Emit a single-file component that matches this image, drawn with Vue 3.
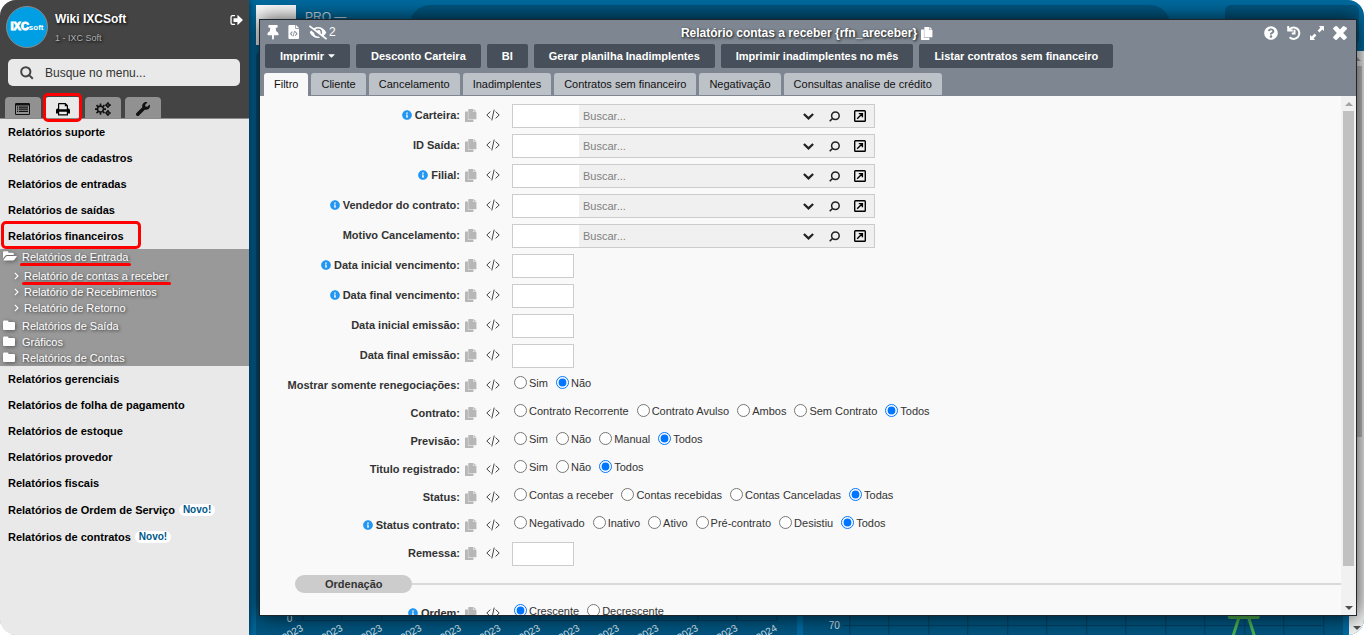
<script setup>
import { h, reactive } from 'vue'

const paths = {
  pin: ['0 0 384 512', 'M298.028 214.267L285.793 96H328c13.255 0 24-10.745 24-24V24c0-13.255-10.745-24-24-24H56C42.745 0 32 10.745 32 24v48c0 13.255 10.745 24 24 24h42.207L85.972 214.267C37.465 236.82 0 277.261 0 328c0 13.255 10.745 24 24 24h136v104.007c0 1.242.289 2.467.845 3.578l24 48c2.941 5.882 11.364 5.893 14.311 0l24-48a8.008 8.008 0 0 0 .845-3.578V352h136c13.255 0 24-10.745 24-24-.001-51.183-37.983-91.42-85.973-113.733z'],
  hidden: ['0 0 640 512', 'M320 400c-75.85 0-137.25-58.71-142.9-133.11L72.2 185.82c-13.79 17.3-26.48 35.59-36.72 55.59a32.35 32.35 0 0 0 0 29.19C89.71 376.41 197.07 448 320 448c26.91 0 52.87-4 77.89-10.46L346 397.39a144.13 144.13 0 0 1-26 2.61zm313.82 58.1l-110.55-85.44a331.25 331.25 0 0 0 81.25-102.07 32.35 32.35 0 0 0 0-29.19C550.29 135.59 442.93 64 320 64a308.15 308.15 0 0 0-147.32 37.7L45.46 3.37A16 16 0 0 0 23 6.18L3.37 31.45A16 16 0 0 0 6.18 53.9l588.36 454.73a16 16 0 0 0 22.46-2.81l19.64-25.27a16 16 0 0 0-2.82-22.45zm-183.72-142l-39.3-30.38A94.75 94.75 0 0 0 416 256a94.76 94.76 0 0 0-121.31-92.21A47.65 47.65 0 0 1 304 192a46.64 46.64 0 0 1-1.54 10l-73.61-56.89A142.31 142.31 0 0 1 320 112a143.92 143.92 0 0 1 144 144c0 21.63-5.29 41.79-13.9 60.11z'],
  wrench: ['0 0 512 512', 'M507.73 109.1c-2.24-9.03-13.54-12.09-20.12-5.51l-74.36 74.36-67.88-11.31-11.31-67.88 74.36-74.36c6.62-6.62 3.43-17.9-5.66-20.16-47.38-11.74-99.55.91-136.58 37.93-39.64 39.64-50.55 97.1-34.05 147.2L18.74 402.76c-24.99 24.99-24.99 65.51 0 90.5 24.99 24.99 65.51 24.99 90.5 0l213.21-213.21c50.12 16.71 107.47 5.68 147.37-34.22 37.07-37.07 49.7-89.32 37.91-136.73z'],
  help: ['0 0 512 512', 'M504 256c0 136.997-111.043 248-248 248S8 392.997 8 256C8 119.083 119.043 8 256 8s248 111.083 248 248zM262.655 90c-54.497 0-89.255 22.957-116.549 63.758-3.536 5.286-2.353 12.415 2.715 16.258l34.699 26.31c5.205 3.947 12.621 3.008 16.665-2.122 17.864-22.658 30.113-35.797 57.303-35.797 20.429 0 45.698 13.148 45.698 32.958 0 14.976-12.363 22.667-32.534 33.976C247.128 238.528 216 254.941 216 296v4c0 6.627 5.373 12 12 12h56c6.627 0 12-5.373 12-12v-1.333c0-28.462 83.186-29.647 83.186-106.667 0-58.002-60.165-102-116.531-102zM256 338c-25.365 0-46 20.635-46 46 0 25.364 20.635 46 46 46s46-20.636 46-46c0-25.365-20.635-46-46-46z'],
  info: ['0 0 512 512', 'M256 8C119.043 8 8 119.083 8 256c0 136.997 111.043 248 248 248s248-111.003 248-248C504 119.083 392.957 8 256 8zm0 110c23.196 0 42 18.804 42 42s-18.804 42-42 42-42-18.804-42-42 18.804-42 42-42zm56 254c0 6.627-5.373 12-12 12h-88c-6.627 0-12-5.373-12-12v-24c0-6.627 5.373-12 12-12h12v-64h-12c-6.627 0-12-5.373-12-12v-24c0-6.627 5.373-12 12-12h64c6.627 0 12 5.373 12 12v100h12c6.627 0 12 5.373 12 12v24z'],
  folder: ['0 0 12 12', 'M1.2 1.5H4.8Q5.4 1.5 5.4 2.1V3H10.9Q12 3 12 4V10Q12 11 10.9 11H1.1Q0 11 0 10V2.6Q0 1.5 1.2 1.5z'],
  folderOpen: ['0 0 14 12', 'M0 8.5V2.4Q0 1.2 1.2 1.2H4.4Q5.4 1.2 5.4 2.2V2.8H9.6Q10.8 2.8 10.8 4V5H4.2Q2.8 5 2.2 5.8zM.6 9.8 3 6.6Q3.4 6 4.2 6H13.4Q14.2 6 13.6 6.8L11.4 9.8Q10.8 10.6 10 10.6H1Q.2 10.6 .6 9.8z'],
  print: ['0 0 14 14', 'M3 1H9.6L12 3.4V6.5H12.4Q14 6.7 14 8.2V11.5H12V13.4H2V11.5H0V8.2Q0 6.7 1.6 6.5H2V2Q2 1 3 1zM3.2 2.2V7.2H10.8V4.2H8.8V2.2zM3.2 9.8V12.2H10.8V9.8z'],
  list: ['0 0 15 12', 'M1.2 0H13.8Q15 0 15 1.2V10.8Q15 12 13.8 12H1.2Q0 12 0 10.8V1.2Q0 0 1.2 0zM1 2.5V11H14V2.5zM2 3.5H3.2V4.7H2zM4 3.5H13V4.7H4zM2 5.6H3.2V6.8H2zM4 5.6H13V6.8H4zM2 7.7H3.2V9H2zM4 7.7H13V9H4z'],
  signout: ['0 0 13 12', 'M5 1H2.4Q.4 1 .4 3V9Q.4 11 2.4 11H5V9.8H2.6Q1.7 9.8 1.7 9V3Q1.7 2.2 2.6 2.2H5zM4 4.2H7.4V1.4Q7.4 .8 8 1.3L12.5 5.6Q12.9 6 12.5 6.4L8 10.7Q7.4 11.2 7.4 10.6V7.9H4Q3.5 7.9 3.5 7.4V4.7Q3.5 4.2 4 4.2z'],
  copy: ['0 0 12 13', 'M0 3.2Q0 2.6 .6 2.6H2.9V10.7H8.4V12.4Q8.4 13 7.8 13H.6Q0 13 0 12.4zM3.3 .6Q3.3 0 3.9 0H8.3V3H11.4V9.7Q11.4 10.3 10.8 10.3H3.9Q3.3 10.3 3.3 9.7zM8.8 0 11.4 2.5H8.8z'],
  fileCode: ['0 0 12 15', 'M1 0H7.4V4H11.4V14Q11.4 15 10.4 15H1Q0 15 0 14V1Q0 0 1 0zM8.2 0 11.4 3.2H8.2zM3.9 6.8 1.6 9.3 3.9 11.8 4.6 11.1 3 9.3 4.6 7.5zM6.1 6.3 4.7 12.2 5.5 12.4 7 6.5zM7.6 6.8 6.9 7.5 8.5 9.3 6.9 11.1 7.6 11.8 9.9 9.3z'],
  close: ['0 0 12 12', 'M2.8 0Q3.3 0 3.7 .4L6 2.9 8.3 .4Q8.7 0 9.2 0L11.8 1.5Q12.2 2.3 11.7 2.8L8.7 6 11.7 9.2Q12.2 9.7 11.7 10.3L10 11.8Q9.3 12.2 8.8 11.7L6 8.9 3.2 11.7Q2.7 12.2 2 11.8L.3 10.3Q-.2 9.7 .3 9.2L3.3 6 .3 2.8Q-.2 2.3 .3 1.7L1.8 .3Q2.3 0 2.8 0z'],
  expand: ['0 0 14 14', 'M9 0H13.5Q14 0 14 .5V5L12.2 3.6 9.4 6.4 7.6 4.6 10.4 1.8zM0 9 1.8 10.4 4.6 7.6 6.4 9.4 3.6 12.2 5 14H.5Q0 14 0 13.5z'],
  caret: ['0 0 8 4', 'M.4 0H7.6Q8 0 7.7 .4L4.4 3.7Q4 4 3.6 3.7L.3 .4Q0 0 .4 0z'],
}
const lines = {
  search: ['0 0 14 14', 2, 'M5.8 1.2a4.6 4.6 0 1 1 0 9.2a4.6 4.6 0 0 1 0-9.2zM9.4 9.4 12.8 12.8'],
  lens: ['0 0 11 11', 1.5, 'M6.4 .9a3.8 3.8 0 1 1 0 7.6a3.8 3.8 0 0 1 0-7.6zM3.6 7.4 .7 10.3'],
  chevron: ['0 0 10 7', 2, 'M.8 1.2 5 5.2 9.2 1.2'],
  open: ['0 0 12 12', 1.4, 'M1.5 .7H10.5Q11.3 .7 11.3 1.5V10.5Q11.3 11.3 10.5 11.3H1.5Q.7 11.3 .7 10.5V1.5Q.7 .7 1.5 .7zM3.2 8.8 8 4M4.8 3.6H8.4V7.2'],
  code: ['0 0 14 12', 1, 'M4.4 2.6.8 6 4.4 9.4M9.6 2.6 13.2 6 9.6 9.4M8.2 .6 5.8 11.4'],
  history: ['0 0 14 14', 2, 'M2.2 3.6A5.7 5.7 0 1 1 2.6 11.2M1.2 0V4.6H5.8M7.5 3.8V7.6H4.8'],
  arrow: ['0 0 5 8', 1.2, 'M.8 .8 4 4 .8 7.2'],
  gears: ['0 0 16 14', 1.6, 'M5.5 4.1a3 3 0 1 1 0 6a3 3 0 0 1 0-6zM5.5 1.4V3.6M5.500 10.6V12.8M0 7.1H2M9 7.1H11M1.500 3.1 3 4.6M8 9.600 9.500 11.1M9.500 3.100 8 4.600M3 9.600 1.500 11.1M12.9 1.7a1.400 1.400 0 1 1 0 2.800a1.400 1.400 0 0 1 0-2.800zM12.900 9.600a1.400 1.400 0 1 1 0 2.800a1.400 1.400 0 0 1 0-2.800zM12.900 .2V1.600M12.900 4.600V6M10.200 3.100H11.400M14.400 3.100H15.800M12.900 8.100V9.500M12.900 12.500V13.900M10.200 11H11.400M14.400 11H15.800'],
}

function Icon({ name }) {
  if (paths[name]) {
    const [viewBox, d] = paths[name]
    return h('svg', { viewBox, fill: 'currentColor', 'fill-rule': 'evenodd', 'aria-hidden': 'true' }, [h('path', { d })])
  }
  const [viewBox, width, d] = lines[name]
  return h('svg', { viewBox, fill: 'none', stroke: 'currentColor', 'stroke-width': width, 'aria-hidden': 'true' }, [h('path', { d })])
}
Icon.props = ['name']

const sideTabs = [
  { icon: 'list', name: 'Cadastros' },
  { icon: 'print', name: 'Relatórios', active: true },
  { icon: 'gears', name: 'Configurações' },
  { icon: 'wrench', name: 'Ferramentas' },
]
const menuTop = ['Relatórios suporte', 'Relatórios de cadastros', 'Relatórios de entradas', 'Relatórios de saídas', 'Relatórios financeiros']
const menuBottom = [
  { text: 'Relatórios gerenciais' },
  { text: 'Relatórios de folha de pagamento' },
  { text: 'Relatórios de estoque' },
  { text: 'Relatórios provedor' },
  { text: 'Relatórios fiscais' },
  { text: 'Relatórios de Ordem de Serviço', isNew: true },
  { text: 'Relatórios de contratos', isNew: true },
]
const reports = ['Relatório de contas a receber', 'Relatório de Recebimentos', 'Relatório de Retorno']
const folders = ['Relatórios de Saída', 'Gráficos', 'Relatórios de Contas']

const actions = ['Imprimir', 'Desconto Carteira', 'BI', 'Gerar planilha Inadimplentes', 'Imprimir inadimplentes no mês', 'Listar contratos sem financeiro']
const tabs = ['Filtro', 'Cliente', 'Cancelamento', 'Inadimplentes', 'Contratos sem financeiro', 'Negativação', 'Consultas analise de crédito']

const fields = [
  { id: 'carteira', label: 'Carteira', info: true, type: 'lookup' },
  { id: 'saida', label: 'ID Saída', type: 'lookup' },
  { id: 'filial', label: 'Filial', info: true, type: 'lookup' },
  { id: 'vendedor', label: 'Vendedor do contrato', info: true, type: 'lookup' },
  { id: 'motivo', label: 'Motivo Cancelamento', type: 'lookup' },
  { id: 'venc-ini', label: 'Data inicial vencimento', info: true, type: 'text' },
  { id: 'venc-fim', label: 'Data final vencimento', info: true, type: 'text' },
  { id: 'emi-ini', label: 'Data inicial emissão', type: 'text' },
  { id: 'emi-fim', label: 'Data final emissão', type: 'text' },
  { id: 'reneg', label: 'Mostrar somente renegociações', type: 'radio', options: ['Sim', 'Não'] },
  { id: 'contrato', label: 'Contrato', type: 'radio', options: ['Contrato Recorrente', 'Contrato Avulso', 'Ambos', 'Sem Contrato', 'Todos'] },
  { id: 'previsao', label: 'Previsão', type: 'radio', options: ['Sim', 'Não', 'Manual', 'Todos'] },
  { id: 'titulo', label: 'Titulo registrado', type: 'radio', options: ['Sim', 'Não', 'Todos'] },
  { id: 'status', label: 'Status', type: 'radio', options: ['Contas a receber', 'Contas recebidas', 'Contas Canceladas', 'Todas'] },
  { id: 'status-contrato', label: 'Status contrato', info: true, type: 'radio', options: ['Negativado', 'Inativo', 'Ativo', 'Pré-contrato', 'Desistiu', 'Todos'] },
  { id: 'remessa', label: 'Remessa', type: 'text' },
  { id: 'ordenacao', type: 'section', label: 'Ordenação' },
  { id: 'ordem', label: 'Ordem', info: true, type: 'radio', options: ['Crescente', 'Decrescente'] },
]
const chosen = reactive({
  reneg: 'Não', contrato: 'Todos', previsao: 'Todos', titulo: 'Todos',
  status: 'Todas', 'status-contrato': 'Todos', ordem: 'Crescente',
})
const years = [...Array(12).fill('2023'), '2024']
</script>

<template>
  <div class="app">
    <aside class="sidebar">
      <header class="side-head">
        <div class="user">
          <div class="avatar"><span><b>IXC</b><small>soft</small></span></div>
          <div class="who">
            <strong>Wiki IXCSoft</strong>
            <span>1 - IXC Soft</span>
          </div>
          <button class="bare signout" aria-label="Sair"><Icon name="signout" /></button>
        </div>
        <label class="menu-search">
          <Icon name="search" />
          <input type="text" placeholder="Busque no menu..." aria-label="Busque no menu">
        </label>
        <nav class="side-tabs">
          <button v-for="t in sideTabs" :key="t.icon" :class="['side-tab', t.icon, { active: t.active }]" :aria-label="t.name">
            <Icon :name="t.icon" />
            <i v-if="t.active" class="mark-tab"></i>
          </button>
        </nav>
      </header>
      <nav class="menu">
        <a v-for="(m, i) in menuTop" :key="m" href="#" class="item">{{ m }}<i v-if="i === 4" class="mark-box"></i></a>
        <div class="submenu">
          <a href="#" class="folder first"><Icon name="folderOpen" /><span>Relatórios de Entrada<i class="mark-line"></i></span></a>
          <a v-for="(r, i) in reports" :key="r" href="#" class="report"><Icon name="arrow" /><span>{{ r }}<i v-if="i === 0" class="mark-line"></i></span></a>
          <div class="folders">
            <a v-for="f in folders" :key="f" href="#" class="folder"><Icon name="folder" /><span>{{ f }}</span></a>
          </div>
        </div>
        <a v-for="m in menuBottom" :key="m.text" href="#" :class="['item', { fresh: m.isNew }]">{{ m.text }}<span v-if="m.isNew" class="new">Novo!</span></a>
      </nav>
    </aside>

    <main class="workspace">
      <div class="topbar">
        <div class="logo"></div>
        <div class="brand">PRO —</div>
        <div class="top-search"></div>
        <div class="profile"></div>
      </div>
      <div class="board">
        <div class="panels">
          <section class="panel">
            <svg class="chart" viewBox="0 0 541 40" preserveAspectRatio="xMidYMax slice">
              <path class="grid" d="M47 0V26M86 0V26M126 0V26M165 0V26M205 0V26M244 0V26M284 0V26M323 0V26M363 0V26M402 0V26M442 0V26M481 0V26M521 0V26M40 25.500H521" />
              <text x="31" y="27">0</text>
              <text v-for="(y, i) in years" :key="i" :transform="`translate(${48 + i * 39.5} 35) rotate(-30)`" text-anchor="end">{{ y }}</text>
              <path d="M477 20.500H487" stroke="#1787c4" />
            </svg>
          </section>
          <section class="panel">
            <svg class="chart" viewBox="0 0 541 40" preserveAspectRatio="xMidYMax slice">
              <path class="grid" d="M47 0V40M86 0V40M126 0V40M165 0V40M205 0V40M244 0V40M284 0V40M323 0V40M363 0V40M402 0V40M442 0V40M481 0V40M521 0V40M40 30.500H521" />
              <text x="26" y="34">70</text>
              <path d="M425 18H457V22Q457 24 455 24H427Q425 24 425 22z" fill="#4caf50" />
              <path d="M436 23 430 42M446 23 452 42" fill="none" stroke="#4caf50" stroke-width="3" />
            </svg>
          </section>
        </div>
        <div class="scrollbar page-scroll"><i class="up"></i><div class="track"><div class="thumb"></div></div><i class="down"></i></div>
      </div>

      <section class="dialog" role="dialog" aria-labelledby="dlg-title">
        <header class="dlg-head">
          <div class="titlebar">
            <div class="tools">
              <button class="bare" aria-label="Fixar"><Icon name="pin" /></button>
              <button class="bare" aria-label="Código"><Icon name="fileCode" /></button>
              <button class="bare eye"><Icon name="hidden" /><span>2</span></button>
            </div>
            <h1 id="dlg-title">Relatório contas a receber {rfn_areceber} <Icon name="copy" /></h1>
            <div class="tools end">
              <button class="bare" aria-label="Ajuda"><Icon name="help" /></button>
              <button class="bare" aria-label="Histórico"><Icon name="history" /></button>
              <button class="bare" aria-label="Expandir"><Icon name="expand" /></button>
              <button class="bare" aria-label="Fechar"><Icon name="close" /></button>
            </div>
          </div>
          <div class="actions">
            <button v-for="(a, i) in actions" :key="a">{{ a }}<Icon v-if="i === 0" name="caret" /></button>
          </div>
          <nav class="tabs">
            <button v-for="(t, i) in tabs" :key="t" :class="{ active: i === 0 }">{{ t }}</button>
          </nav>
        </header>
        <div class="dlg-body">
          <form class="form" @submit.prevent>
            <div v-for="f in fields" :key="f.id" :class="['row', f.type]">
              <template v-if="f.type === 'section'">
                <h2>{{ f.label }}</h2><hr>
              </template>
              <template v-else>
                <div class="label">
                  <Icon v-if="f.info" name="info" />
                  <span v-if="f.type === 'radio'" :id="f.id">{{ f.label }}:</span>
                  <label v-else :for="f.id">{{ f.label }}:</label>
                </div>
                <div class="marks"><Icon name="copy" /><Icon name="code" /></div>
                <div v-if="f.type === 'lookup'" class="lookup-box">
                  <input :id="f.id" type="text" class="code">
                  <input type="text" class="find" placeholder="Buscar..." :aria-label="'Buscar ' + f.label">
                  <button type="button" class="bare" aria-label="Abrir lista"><Icon name="chevron" /></button>
                  <button type="button" class="bare" aria-label="Pesquisar"><Icon name="lens" /></button>
                  <button type="button" class="bare" aria-label="Abrir cadastro"><Icon name="open" /></button>
                </div>
                <input v-else-if="f.type === 'text'" :id="f.id" type="text" class="short">
                <div v-else class="options" role="radiogroup" :aria-labelledby="f.id">
                  <label v-for="o in f.options" :key="o"><input v-model="chosen[f.id]" type="radio" :name="f.id" :value="o">{{ o }}</label>
                </div>
              </template>
            </div>
          </form>
          <div class="scrollbar"><i class="up"></i><div class="track"><div class="thumb"></div></div><i class="down"></i></div>
        </div>
      </section>
    </main>
  </div>
</template>

<style>
body { margin: 0; background: #fff; }
</style>

<style scoped>
* { box-sizing: border-box; }
.app { display: flex; height: 100vh; overflow: hidden; border-radius: 16px; font: 11px/16px "Liberation Sans", Arial, sans-serif; color: #333; }
button, input { font: inherit; color: inherit; }
a { color: inherit; text-decoration: none; }
svg { display: block; flex: none; }
.bare { display: flex; align-items: center; justify-content: center; padding: 0; border: 0; background: none; }

/* sidebar */
.sidebar { width: 249px; flex: none; display: flex; flex-direction: column; background: #e9e9e9; box-shadow: 0 0 8px rgba(0, 0, 0, .6); z-index: 1; }
.side-head { height: 119px; background: #444; border-bottom: 1px solid #8c8c8c; display: flex; flex-direction: column; }
.user { display: flex; height: 59px; padding: 6px 6px 0; }
.avatar { width: 42px; height: 42px; border: 1px solid #888; border-radius: 50%; background: #009ee3; color: #fff; display: flex; align-items: center; justify-content: center; font-size: 11px; line-height: 40px; }
.avatar b { -webkit-text-stroke: 1px #fff; }
.avatar small { font-size: 8px; font-weight: bold; }
.who { flex: 1; margin-left: 7px; padding-top: 5px; display: flex; flex-direction: column; gap: 5px; text-shadow: 1px 1px 3px #000; }
.who strong { color: #fff; font-size: 12px; }
.who span { color: #b0b0b0; font-size: 9px; line-height: 12px; }
.signout { width: 14px; height: 28px; color: #fff; }
.signout svg { width: 13px; height: 12px; }
.menu-search { display: flex; align-items: center; height: 27px; margin: 0 9px 0 8px; border-radius: 5px; background: #e9e9e9; padding-left: 12px; gap: 11px; color: #444; }
.menu-search svg { width: 14px; height: 14px; }
.menu-search input { flex: 1; min-width: 0; border: 0; padding: 0; background: none; font-size: 12px; outline: 0; }
.menu-search input::placeholder { color: #333; opacity: 1; }
.side-tabs { display: flex; gap: 4px; margin-top: auto; padding-left: 5px; }
.side-tab { position: relative; width: 36px; height: 21px; display: flex; align-items: center; justify-content: center; padding: 2px 1px 0 0; border: 0; border-radius: 4px 4px 0 0; background: #919191; color: #111; }
.side-tab svg { width: 14px; height: 14px; }
.side-tab.list svg { width: 15px; height: 12px; }
.side-tab.gears svg { width: 16px; }
.side-tab.active { background: #e9e9e9; color: #000; }
.mark-tab { position: absolute; inset: -4px -1px -4px -2px; border: 3px solid #f00; border-radius: 5px; }
.menu { display: flex; flex-direction: column; }
.item { position: relative; display: flex; align-items: center; height: 26px; padding-left: 8px; font-weight: bold; color: #000; }
.item.fresh { height: 27px; }
.mark-box { position: absolute; left: 1px; top: -2px; width: 140px; height: 28px; border: 3px solid #f00; border-radius: 5px; }
.new { margin-left: 4px; padding: 0 4px; border-radius: 6px; background: #fff; color: #00588a; font-size: 10px; line-height: 12px; }
.submenu { background: #999; height: 117px; color: #fff; text-shadow: 1px 1px 3px #333; }
.submenu svg { filter: drop-shadow(1px 1px 2px #555); }
.folder { display: flex; align-items: center; height: 16px; padding-left: 3px; }
.folder svg { width: 12px; height: 12px; margin: 0 7px 2px 0; }
.folder.first { height: 19px; padding-bottom: 3px; }
.folder.first svg { width: 14px; margin-right: 5px; }
.report { display: flex; align-items: center; height: 16px; padding-left: 14px; gap: 5px; }
.report svg { width: 5px; height: 8px; }
.folders { padding-top: 2px; }
.submenu span { position: relative; }
.mark-line { position: absolute; left: -2px; right: -3px; bottom: -1px; height: 3px; border-radius: 2px; background: #f00; }

/* backdrop */
.workspace { position: relative; flex: 1; min-width: 0; display: flex; flex-direction: column; background: #006a9f; }
.topbar { display: flex; height: 51px; padding: 5px 5px 6px 7px; }
.logo { width: 40px; background: #fff; }
.brand { width: 114px; padding: 4px 0 0 9px; color: #cfe0ea; font-size: 12px; }
.top-search { flex: 1; background: #00557f; border-radius: 20px; }
.profile { width: 134px; margin-left: 55px; background: #00557f; border-radius: 6px; }
.board { flex: 1; display: flex; }
.panels { flex: 1; display: flex; gap: 6px; padding: 0 6px 0 7px; }
.panel { flex: 1; display: flex; align-items: flex-end; background: #005580; border-radius: 6px 6px 0 0; }
.chart { width: 100%; height: 40px; fill: #d6e2ea; font-size: 10px; }
.grid { fill: none; stroke: #003f61; }

/* scroll bars */
.scrollbar { width: 15px; flex: none; display: flex; flex-direction: column; background: #f1f1f1; }
.scrollbar i { height: 15px; flex: none; display: flex; align-items: center; justify-content: center; }
.scrollbar i::before { content: ""; border: 4px solid transparent; border-top-width: 0; border-bottom-color: #a3a3a3; }
.scrollbar .down::before { border-top: 4px solid #505050; border-bottom: 0; }
.track { flex: 1; padding: 0 2px; }
.thumb { height: 93%; background: #c1c1c1; }
.page-scroll .thumb { height: 67%; }

/* dialog */
.dialog { position: absolute; inset: 19px 7px 19px 10px; display: flex; flex-direction: column; overflow: hidden; border: 1px solid #1e252b; background: #f9f9f9; box-shadow: 0 0 20px rgba(0, 0, 0, .8); }
.dlg-head { background: #7e8791; color: #fff; }
.titlebar { display: grid; grid-template-columns: 1fr auto 1fr; height: 24px; padding: 0 9px 0 7px; }
.tools { display: flex; align-items: center; gap: 9px; }
.tools svg { width: 14px; height: 14px; }
.tools svg[viewBox^="0 0 384"] { width: 12px; height: 15px; }
.tools svg[viewBox="0 0 12 15"] { width: 12px; }
.tools .eye svg { width: 18px; height: 15px; }
.tools .eye { gap: 2px; font-size: 12px; }
.tools.end { justify-content: flex-end; gap: 9px; padding-top: 2px; }
h1 { margin: 0; display: flex; align-items: center; gap: 4px; padding-top: 2px; font-size: 12px; text-shadow: 1px 1px 3px #000; }
h1 svg { width: 12px; height: 13px; }
.actions { display: flex; gap: 6px; padding-left: 5px; }
.actions button { display: flex; align-items: center; gap: 4px; height: 24px; padding: 0 15px; border: 0; border-radius: 2px; background: #47505a; color: #fff; font-weight: bold; }
.actions svg { width: 7px; height: 4px; }
.tabs { display: flex; gap: 3px; padding: 5px 4px 0; border-bottom: 1px solid #7e8791; }
.tabs button { height: 22px; padding: 0 10px; border: 0; border-radius: 3px 3px 0 0; background: #bdc1c8; color: #111; }
.tabs .active { background: #f9f9f9; margin-bottom: -1px; height: 23px; padding-bottom: 1px; }
.dlg-body { flex: 1; min-height: 0; display: flex; }
.form { flex: 1; min-width: 0; overflow: hidden; padding-top: 4px; }
.row { display: grid; grid-template-columns: 200px 52px 1fr; height: 30px; }
.row.radio { height: 28px; }
.label { display: flex; align-items: center; justify-content: flex-end; gap: 3px; height: 30px; font-weight: bold; }
.label svg { width: 10px; height: 10px; color: #2196f3; }
.marks { display: flex; align-items: center; height: 30px; padding-left: 5px; gap: 9px; color: #444; }
.marks svg { width: 14px; height: 12px; }
.marks svg:first-child { width: 12px; height: 13px; color: #b7b7b7; }
.lookup-box { display: flex; width: 363px; height: 24px; margin-top: 4px; border: 1px solid #ccc; background: #f0f0f0; padding-right: 1px; }
.lookup-box input { border: 0; padding: 0 4px; min-width: 0; background: none; outline: 0; }
.lookup-box .code { width: 66px; background: #fff; }
.lookup-box .find { flex: 1; }
.find::placeholder { color: #808080; opacity: 1; }
.lookup-box button { width: 26px; color: #222; }
.lookup-box button svg { width: 11px; height: 11px; }
.lookup-box button:last-child { color: #000; }
.lookup-box button:last-child svg { width: 12px; height: 12px; }
.short { width: 62px; height: 24px; margin-top: 4px; padding: 0 4px; border: 1px solid #ccc; background: #fff; }
.options { display: flex; align-items: center; gap: 8px; height: 25px; padding-left: 2px; }
.options label { display: flex; align-items: center; gap: 2px; }
.options input { width: 13px; height: 13px; margin: 0; }
.row.section { display: flex; align-items: center; padding-left: 35px; padding-top: 2px; }
h2 { margin: 0; padding: 0 30px; border-radius: 9px; background: #ccc; font-size: 11px; line-height: 18px; }
hr { flex: 1; margin: 0; border: 0; height: 2px; background: #d9d9d9; }
</style>
